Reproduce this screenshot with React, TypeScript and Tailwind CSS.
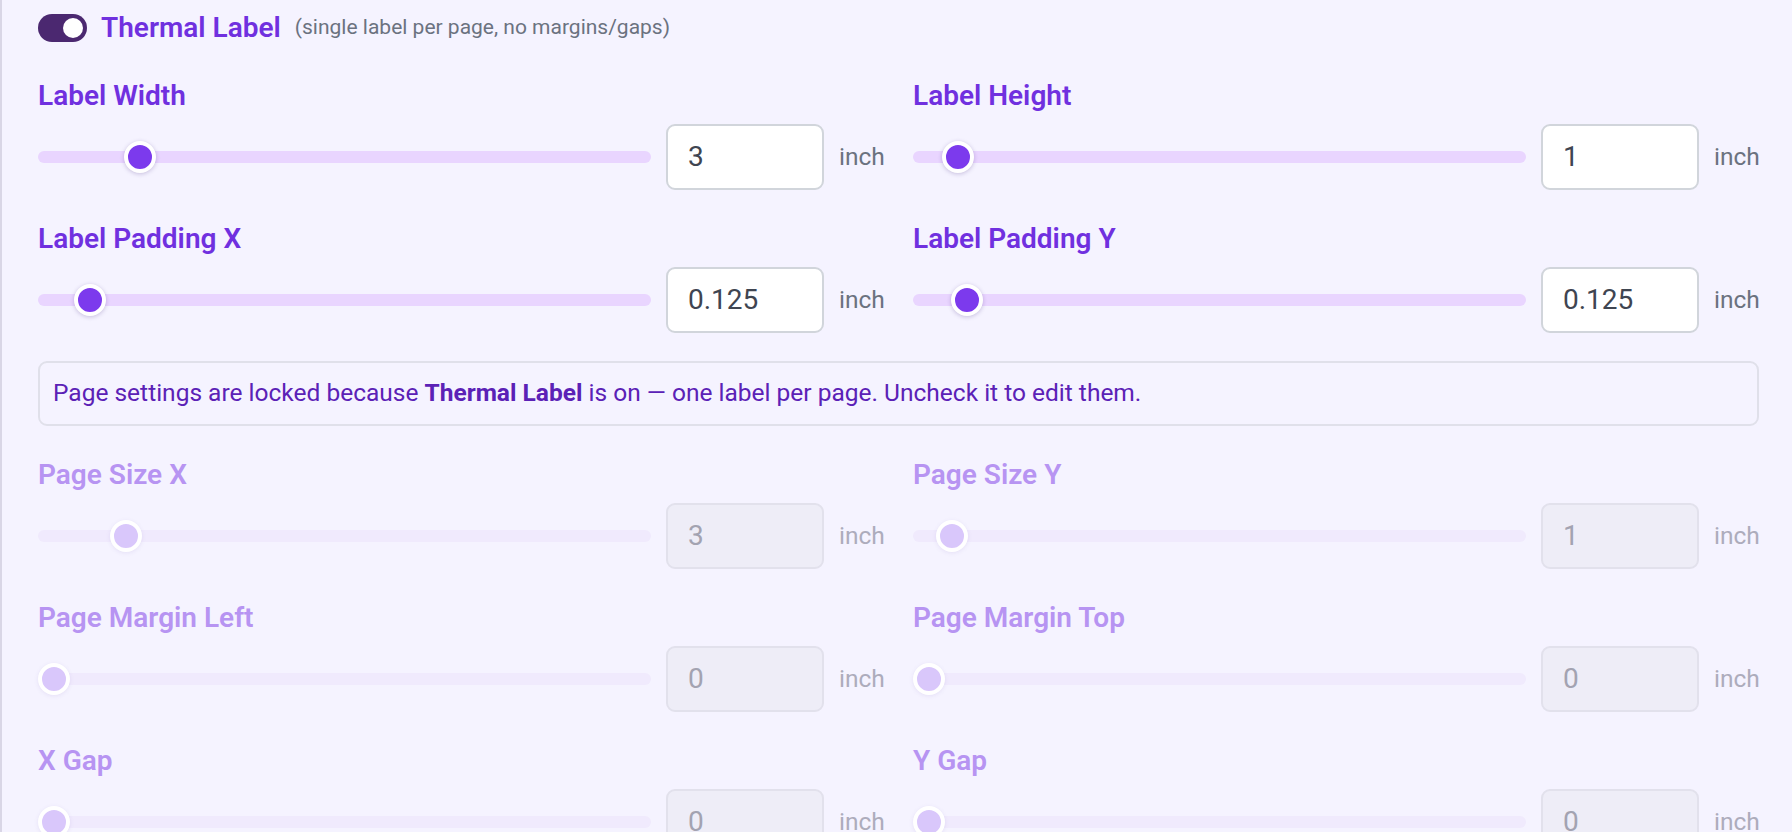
import React from "react";

type Field = {
  label: string;
  value: string;
  pos: number; // thumb position 0..1 along the track
};

const labelFields: Field[][] = [
  [
    { label: "Label Width", value: "3", pos: 0.148 },
    { label: "Label Height", value: "1", pos: 0.05 },
  ],
  [
    { label: "Label Padding X", value: "0.125", pos: 0.062 },
    { label: "Label Padding Y", value: "0.125", pos: 0.065 },
  ],
];

const pageFields: Field[][] = [
  [
    { label: "Page Size X", value: "3", pos: 0.124 },
    { label: "Page Size Y", value: "1", pos: 0.04 },
  ],
  [
    { label: "Page Margin Left", value: "0", pos: 0 },
    { label: "Page Margin Top", value: "0", pos: 0 },
  ],
  [
    { label: "X Gap", value: "0", pos: 0 },
    { label: "Y Gap", value: "0", pos: 0 },
  ],
];

function SliderField({ field, disabled }: { field: Field; disabled?: boolean }) {
  return (
    <div className="flex flex-col">
      <span
        className={
          disabled
            ? "text-[28px] leading-[42px] font-semibold text-[#b794f2] mb-[7px]"
            : "text-[28px] leading-[42px] font-semibold text-[#7030df] mb-[7px]"
        }
      >
        {field.label}
      </span>
      <div className="flex items-center gap-[15px] h-[66px]">
        {/* Track */}
        <div
          className={
            disabled
              ? "relative flex-1 h-[12px] rounded-full bg-[#f0eafd]"
              : "relative flex-1 h-[12px] rounded-full bg-[#e9d5ff]"
          }
        >
          <div
            className={
              disabled
                ? "absolute top-1/2 -translate-y-1/2 w-[32px] h-[32px] rounded-full bg-[#d9c7fb] border-[4px] border-white shadow-[0_1px_4px_rgba(120,100,180,0.12)]"
                : "absolute top-1/2 -translate-y-1/2 w-[32px] h-[32px] rounded-full bg-[#7c3aed] border-[4px] border-white shadow-[0_1px_4px_rgba(60,30,120,0.25)]"
            }
            style={{ left: `calc(${field.pos} * (100% - 32px))` }}
          />
        </div>

        {/* Value */}
        <div
          className={
            disabled
              ? "w-[158px] h-[66px] shrink-0 flex items-center px-[20px] rounded-[9px] border-2 border-[#e2e1ec] bg-[#eeedf7] text-[28px] text-[#a3a3b1]"
              : "w-[158px] h-[66px] shrink-0 flex items-center px-[20px] rounded-[9px] border-2 border-[#d1d5db] bg-white text-[28px] text-[#3f4551]"
          }
        >
          {field.value}
        </div>

        <span
          className={
            disabled
              ? "w-[45px] shrink-0 text-[24.5px] text-[#adacbc]"
              : "w-[45px] shrink-0 text-[24.5px] text-[#6b7280]"
          }
        >
          inch
        </span>
      </div>
    </div>
  );
}

export default function App() {
  return (
    <div
      className="min-h-screen bg-[#f5f3ff] border-l-2 border-[#d9d6e6] pl-[36px] pr-[33px] pt-[14px] pb-10"
      style={{ fontFamily: "Roboto, 'Noto Sans', sans-serif" }}
    >
      {/* Thermal toggle */}
      <div className="flex items-center h-[28px] mb-[33px]">
        <div className="w-[49px] h-[28px] rounded-full bg-[#4b2870] flex items-center justify-end pr-[4px] shrink-0">
          <div className="w-[20px] h-[20px] rounded-full bg-white" />
        </div>
        <span className="ml-[14px] text-[28px] font-semibold text-[#7030df] whitespace-nowrap">
          Thermal Label
        </span>
        <span className="ml-[14px] text-[21px] text-[#6b7280] whitespace-nowrap">
          (single label per page, no margins/gaps)
        </span>
      </div>

      <div className="grid grid-cols-2 gap-x-[29px] gap-y-[28px]">
        {labelFields.map((pair) =>
          pair.map((f) => <SliderField key={f.label} field={f} />)
        )}

        {/* Lock notice */}
        <div className="col-span-2 h-[65px] flex items-center px-[13px] rounded-[9px] border-2 border-[#e0e0ea] text-[24.5px] text-[#5b21b6]">
          <p>
            Page settings are locked because <strong className="font-bold">Thermal Label</strong> is
            on — one label per page. Uncheck it to edit them.
          </p>
        </div>

        {pageFields.map((pair) =>
          pair.map((f) => <SliderField key={f.label} field={f} disabled />)
        )}
      </div>
    </div>
  );
}
